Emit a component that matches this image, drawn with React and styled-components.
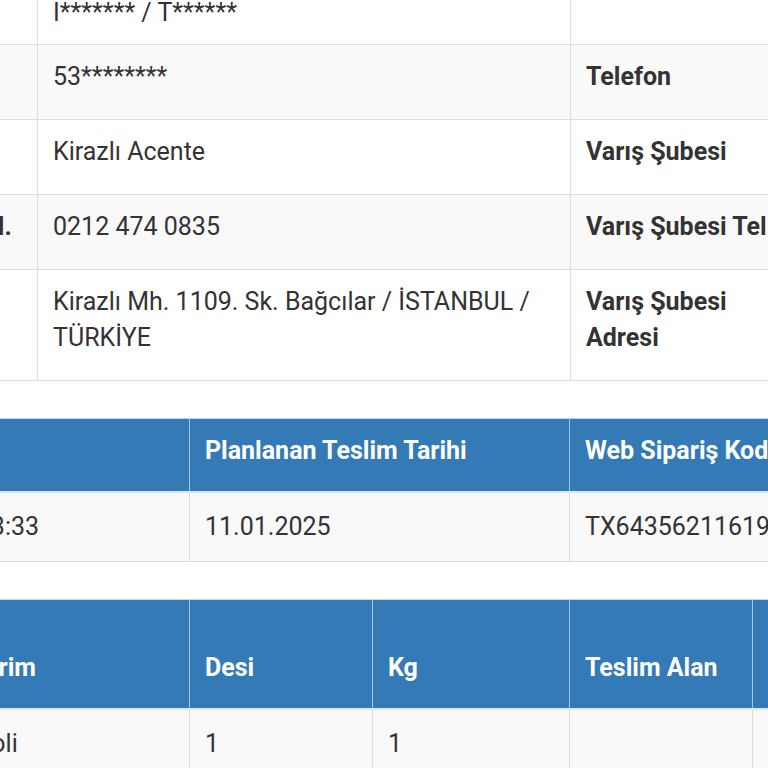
import React from "react";
import styled, { createGlobalStyle } from "styled-components";

const GlobalStyle = createGlobalStyle`
  html, body {
    margin: 0;
    padding: 0;
    background: #fff;
    overflow: hidden;
  }
  body {
    font-family: Roboto, "Liberation Sans", sans-serif;
    color: #333;
  }
`;

// the page is seen scrolled: part of it lies left of and above the window
const Page = styled.div`
  margin: -99px 0 0 -171px;
  width: 1500px;
`;

const Table = styled.table`
  table-layout: fixed;
  border-collapse: collapse;
  width: ${(p) => p.$width}px;
  margin-bottom: 37px;
  font-size: 25px;
  line-height: 36px;

  tbody tr:nth-child(odd) {
    background: #f9f9f9;
  }
`;

const Col = styled.col`
  width: ${(p) => p.$w}px;
`;

const Th = styled.th`
  background: #337ab7;
  color: #fff;
  font-weight: 700;
  text-align: left;
  vertical-align: bottom;
  padding: 14px 15px 22px;
  border: 1px solid #a9c6e2;
  border-top: 1px solid #c4d7ea;
  border-bottom: 2px solid #dfe6ee;
`;

const pads = {
  loose: "14px 15px 24px",
  tight: "24px 15px 13px",
  normal: "16px 15px 16px",
};

const Td = styled.td`
  vertical-align: top;
  text-align: left;
  padding: ${(p) => pads[p.$pad || "normal"]};
  border: 1px solid #ddd;
  font-weight: ${(p) => (p.$label ? 700 : 400)};
  color: #333;
`;

const infoRows = [
  ["Gönderici", "S****** / K******", "Alıcı", "M****** / A******"],
  ["Alıcı", "I******* / T******", "", ""],
  ["Telefon", "53********", "Telefon", "53********"],
  ["Çıkış Şubesi", "Kirazlı Acente", "Varış Şubesi", "Kirazlı Acente"],
  ["Çıkış Şube Tel.", "0212 474 0835", "Varış Şubesi Tel.", "0212 474 0835"],
  [
    "Çıkış Şubesi Adresi",
    "Kirazlı Mh. 1109. Sk. Bağcılar / İSTANBUL / TÜRKİYE",
    "Varış Şubesi Adresi",
    "Kirazlı Mh. 1109. Sk. Bağcılar / İSTANBUL / TÜRKİYE",
  ],
];

const padFor = (i) => (i === 0 ? "normal" : i === 1 ? "tight" : "loose");

const InfoTable = () => (
  <Table $width={1400}>
    <colgroup>
      <Col $w={208} />
      <Col $w={533} />
      <Col $w={232} />
      <Col $w={427} />
    </colgroup>
    <tbody>
      {infoRows.map((r, i) => (
        <tr key={i}>
          <Td $label $pad={padFor(i)}>{r[0]}</Td>
          <Td $pad={padFor(i)}>{r[1]}</Td>
          <Td $label $pad={padFor(i)}>{r[2]}</Td>
          <Td $pad={padFor(i)}>{r[3]}</Td>
        </tr>
      ))}
    </tbody>
  </Table>
);

const DateTable = () => (
  <Table $width={1100}>
    <colgroup>
      <Col $w={360} />
      <Col $w={380} />
      <Col $w={360} />
    </colgroup>
    <thead>
      <tr>
        <Th>Çıkış Tarihi</Th>
        <Th>Planlanan Teslim Tarihi</Th>
        <Th>Web Sipariş Kodu</Th>
      </tr>
    </thead>
    <tbody>
      <tr>
        <Td>09.01.2025 13:33</Td>
        <Td>11.01.2025</Td>
        <Td>TX6435621161993</Td>
      </tr>
    </tbody>
  </Table>
);

const PieceTable = () => (
  <Table $width={1050}>
    <colgroup>
      <Col $w={131} />
      <Col $w={229} />
      <Col $w={183} />
      <Col $w={197} />
      <Col $w={183} />
      <Col $w={127} />
    </colgroup>
    <thead>
      <tr>
        <Th>Adet</Th>
        <Th>Birim</Th>
        <Th>Desi</Th>
        <Th>Kg</Th>
        <Th>Teslim Alan</Th>
        <Th>Teslim Tarihi</Th>
      </tr>
    </thead>
    <tbody>
      <tr>
        <Td>1</Td>
        <Td>Koli</Td>
        <Td>1</Td>
        <Td>1</Td>
        <Td></Td>
        <Td></Td>
      </tr>
    </tbody>
  </Table>
);

export default function App() {
  return (
    <>
      <GlobalStyle />
      <Page>
        <InfoTable />
        <DateTable />
        <PieceTable />
      </Page>
    </>
  );
}
